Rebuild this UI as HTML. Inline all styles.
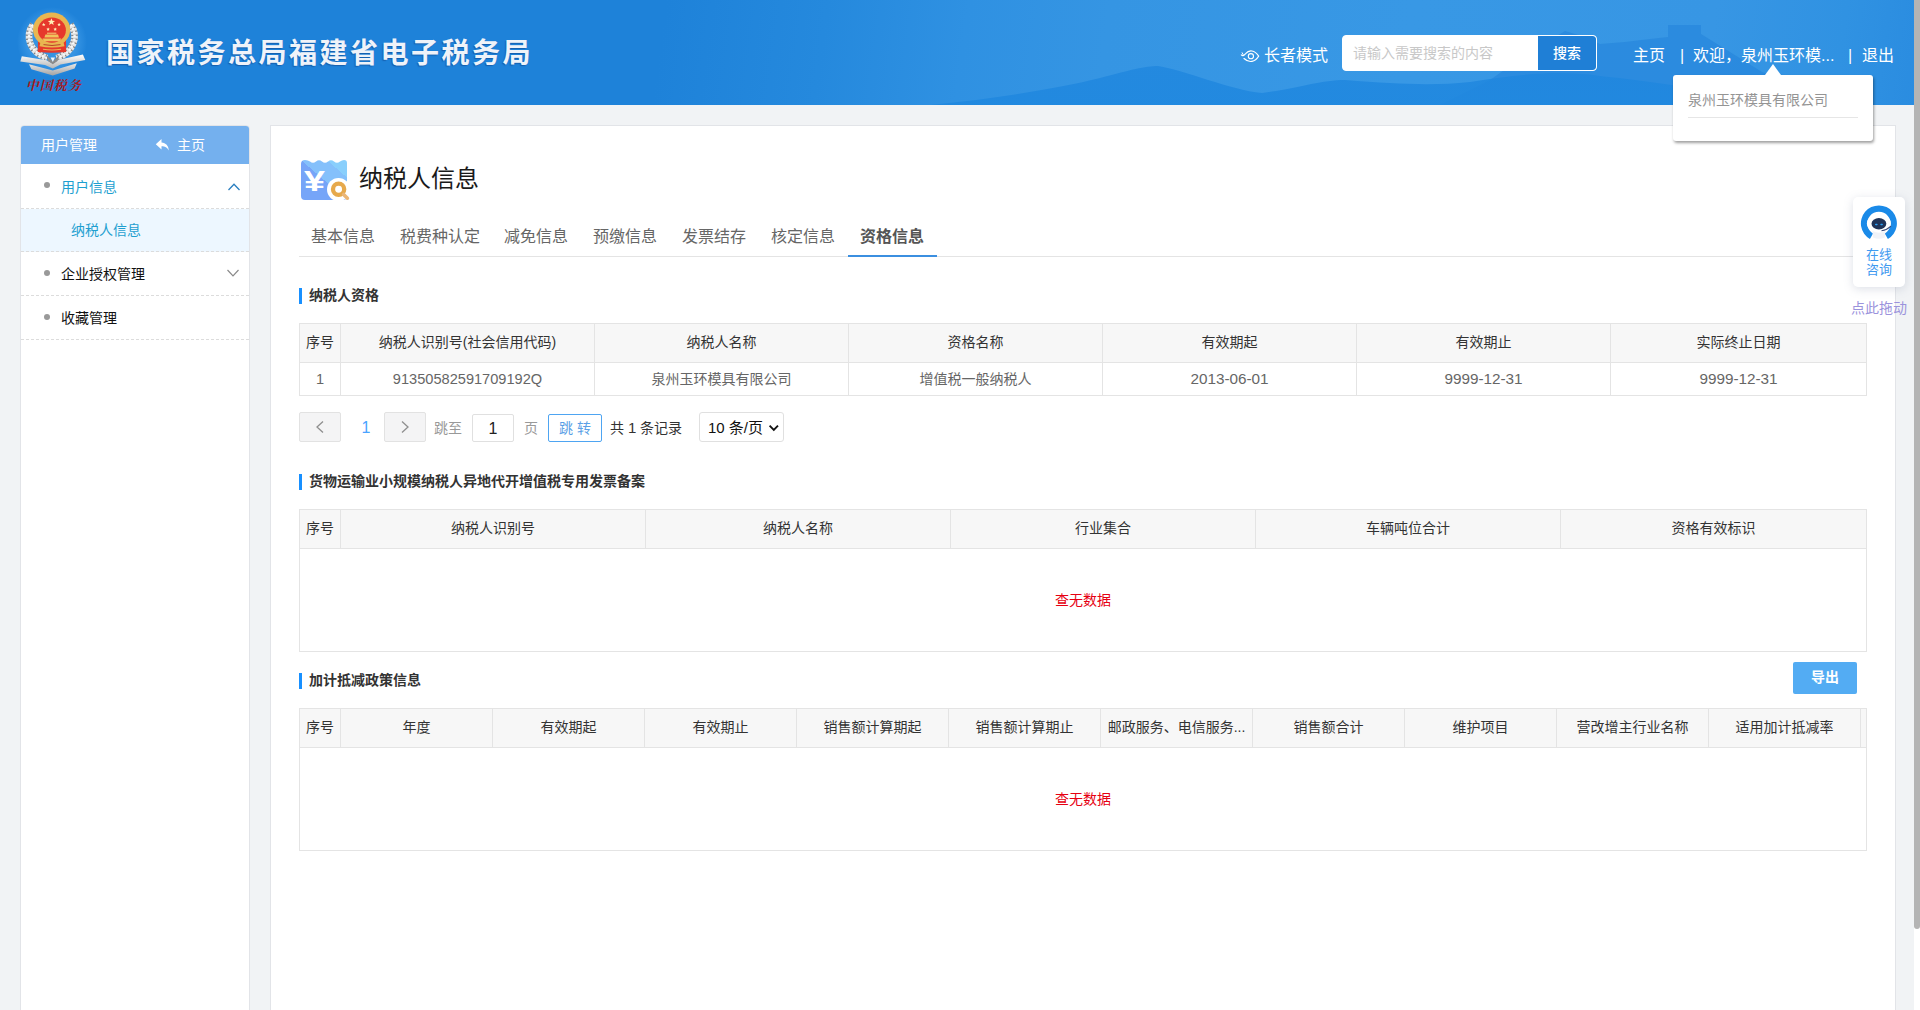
<!DOCTYPE html>
<html lang="zh-CN">
<head>
<meta charset="utf-8">
<title>国家税务总局福建省电子税务局</title>
<style>
*{box-sizing:border-box;margin:0;padding:0}
html,body{width:1920px;height:1010px;overflow:hidden}
body{position:relative;background:#f1f3f5;font-family:"Liberation Sans","Noto Sans CJK SC",sans-serif;font-size:14px;color:#333}
.abs{position:absolute}
/* header */
#hd{position:absolute;left:0;top:0;width:1914px;height:105px;background:linear-gradient(98deg,#1e82d9 0,#1e82d9 660px,#2589dd 820px,#2f91e2 960px,#3595e3 1100px,#3898e5 1400px,#3796e4 1700px,#3092e2 1830px,#2a8ce0 1914px);overflow:hidden}
#hd .ttl{position:absolute;left:106px;top:34px;font-size:28px;line-height:40px;font-weight:bold;color:#eff3f9;letter-spacing:2.5px;text-shadow:-1px 1px 1px rgba(10,50,120,.45);white-space:nowrap}
#logo{position:absolute;left:0;top:0}
.hlink{position:absolute;top:44px;font-size:16px;line-height:24px;color:#fff;white-space:nowrap}
#srch{position:absolute;left:1342px;top:35px;width:255px;height:36px;border:1px solid #fff;border-radius:4px;background:#fff;overflow:hidden}
#srch .ph{position:absolute;left:10px;top:0;line-height:34px;font-size:14px;color:#c8c8c8}
#srch .btn{position:absolute;right:0;top:0;width:58px;height:34px;background:#1f7fd6;color:#fff;font-size:14px;font-weight:500;line-height:34px;text-align:center;border-radius:0 3px 3px 0}
#pop{position:absolute;left:1673px;top:75px;width:200px;height:66px;background:#fff;border-radius:3px;box-shadow:1px 2px 3px rgba(0,0,0,.38);z-index:5}
#pop .t{position:absolute;left:15px;top:15px;font-size:14px;line-height:20px;color:#949494;white-space:nowrap}
#pop .ln{position:absolute;left:15px;top:42px;width:170px;height:1px;background:#e6e6e6}
#poparr{position:absolute;left:1765px;top:64px;width:0;height:0;border-left:8.5px solid transparent;border-right:8.5px solid transparent;border-bottom:11px solid #fff;z-index:6}
/* sidebar */
#sb{position:absolute;left:20px;top:125px;width:230px;height:900px;background:#fff;border:1px solid #e2e4e8;border-radius:4px 4px 0 0}
#sb .h{height:38px;border-radius:3px 3px 0 0;background:#74b0ee;color:#fff;font-size:14px;line-height:38px;position:relative}
#sb .it{height:44px;border-bottom:1px dashed #dcdcdc;position:relative;line-height:44px;font-size:14px;color:#111}
#sb .it.f{height:45px;line-height:46px}
#sb .it .dot{position:absolute;left:23px;top:18px;width:6px;height:6px;border-radius:50%;background:#999}
#sb .it .tx{position:absolute;left:40px;top:0}
#sb .sub{height:43px;border-bottom:1px dashed #dcdcdc;background:#edf7ff;color:#1e9fd0;line-height:43px;padding-left:50px;font-size:14px}
/* main */
#mn{position:absolute;left:270px;top:125px;width:1626px;height:900px;background:#fff;border:1px solid #e2e4e8}
.tab{position:absolute;top:226px;font-size:16px;line-height:22px;color:#666;white-space:nowrap}
.sec{position:absolute;left:299px;font-size:14px;font-weight:bold;line-height:16px;color:#333;padding-left:7px;border-left:3px solid #1890ff;white-space:nowrap;height:16px}
.sec span{position:relative;top:-1px}
table{border-collapse:collapse;table-layout:fixed;position:absolute;left:299px}
th,td{border:1px solid #e4e4e4;text-align:center;font-weight:normal;font-size:14px;white-space:nowrap;overflow:hidden;padding:0 0 2px 0}
th{background:#f7f7f7;color:#333;padding-bottom:4px}
td.n{font-size:14.6px;padding-bottom:0}
td.d{font-size:15.3px;padding-bottom:0}
td{color:#666}
.pbtn{position:absolute;top:412px;width:42px;height:30px;border:1px solid #e2e2e2;border-radius:2px;background:#f4f4f5;display:flex;align-items:center;justify-content:center}
.nod{color:#e60012;font-size:14px}
</style>
</head>
<body>
<div id="hd">
  <svg class="abs" style="left:0;top:0" width="1914" height="105" viewBox="0 0 1914 105">
    <defs><linearGradient id="mg" x1="0" y1="0" x2="0" y2="1"><stop offset="0" stop-color="#1f86de" stop-opacity=".8"/><stop offset="1" stop-color="#2088df" stop-opacity=".9"/></linearGradient>
    <linearGradient id="tg" x1="0" y1="0" x2="0" y2="1"><stop offset="0" stop-color="#1e82d9" stop-opacity=".35"/><stop offset=".6" stop-color="#1e82d9" stop-opacity="0"/></linearGradient></defs>
        <path d="M1440 105 L1490 80 L1530 52 L1565 31 L1585 37 L1600 44 L1625 42 L1650 39 L1668 37 L1668 25 L1701 25 L1701 34 L1730 52 L1762 72 L1805 87 L1850 105 Z" fill="#1f7fd9" opacity=".5"/>
    <path d="M930 105 C1000 98 1060 88 1100 78 C1130 70 1145 66 1158 66 C1185 70 1230 90 1262 93 C1300 88 1320 80 1345 80 C1400 84 1430 86 1470 82 C1520 74 1560 70 1600 76 C1660 82 1720 92 1790 105 Z" fill="url(#mg)"/>
  </svg>
  <svg id="logo" width="110" height="105" viewBox="0 0 110 105">
    <defs>
      <linearGradient id="sv" x1="0" y1="0" x2="0" y2="1"><stop offset="0" stop-color="#ffffff"/><stop offset="1" stop-color="#b4b4b4"/></linearGradient>
      <linearGradient id="sv2" x1="0" y1="0" x2="0" y2="1"><stop offset="0" stop-color="#e9e9e9"/><stop offset="1" stop-color="#a2a2a2"/></linearGradient>
      <radialGradient id="gl" cx="0.5" cy="0.5" r="0.5"><stop offset="0.7" stop-color="#58aef2" stop-opacity=".4"/><stop offset="1" stop-color="#58aef2" stop-opacity="0"/></radialGradient>
    </defs>
    <ellipse cx="52" cy="42" rx="35" ry="35" fill="url(#gl)"/>
    <!-- wreath -->
    <g fill="none" stroke-linecap="butt">
      <path d="M33 24.5 C24.6 36 29.5 52 47 58" stroke="#e6e6e6" stroke-width="6.6"/>
      <path d="M70.6 24.5 C79 36 74.1 52 56.6 58" stroke="#e6e6e6" stroke-width="6.6"/>
      <path d="M33 24.5 C24.6 36 29.5 52 47 58" stroke="#5f5f5f" stroke-width="6.6" stroke-dasharray="1.1 2.6" opacity=".75"/>
      <path d="M70.6 24.5 C79 36 74.1 52 56.6 58" stroke="#5f5f5f" stroke-width="6.6" stroke-dasharray="1.1 2.6" opacity=".75"/>
      <path d="M33 24.5 C24.6 36 29.5 52 47 58" stroke="#fff" stroke-width="2.4" stroke-dasharray="2 1.7" opacity=".9"/>
      <path d="M70.6 24.5 C79 36 74.1 52 56.6 58" stroke="#fff" stroke-width="2.4" stroke-dasharray="2 1.7" opacity=".9"/>
    </g>
    <!-- ribbon -->
    <path d="M29 64.2 L52.8 70.6 L76.8 63.2 L74.6 68.4 L52.8 75.6 L31.4 69.2 Z" fill="url(#sv2)"/>
    <path d="M20.3 61.4 L21.8 56.2 L46.5 60.2 L52.8 63.6 L59 59.8 L82.9 54.4 L85.3 60 L60.5 64.4 L52.8 68.6 L45 65 Z" fill="url(#sv)"/>
    <path d="M46 54.5 L52.8 61.5 L59.5 54.5 L57.5 61 L52.8 64.2 L48 61 Z" fill="#8b8b8b"/>
    <path d="M50.6 57.5 L52.8 62 L55 57.5 Z" fill="#f4f4f4"/>
    <!-- emblem -->
    <path d="M38 40 H66 L66.2 52 Q52 53.5 37.8 52 Z" fill="#e6382c"/>
    <ellipse cx="51.6" cy="29.6" rx="18.6" ry="17.1" fill="#e9b650"/>
    <ellipse cx="51.9" cy="30.2" rx="14" ry="12.6" fill="#e6382c"/>
    <path d="M40.5 42.3 Q52 45.2 63.5 42.3 L64.5 46.2 Q52 48.8 39.5 46.2 Z" fill="#e9b650"/>
    <path d="M43.5 44.6 Q52 46.4 60.5 44.6" stroke="#b8452a" stroke-width="1" fill="none"/>
    <path d="M43 49.3 Q52 50.6 61 49.3" stroke="#e9b650" stroke-width="1.1" fill="none"/>
    <path d="M42.5 38.4 H61.3 L59.6 41.2 H44.2 Z" fill="#efc35c"/>
    <path d="M45.4 34.4 H58 L59 37.4 H44.4 Z" fill="#efc35c"/>
    <path d="M47 33.2 H56.4" stroke="#f6d57a" stroke-width="1"/>
    <path d="M51.4 18.3 l1 2.4 2.6 .2 -2 1.6 .7 2.5 -2.3 -1.4 -2.3 1.4 .7 -2.5 -2 -1.6 2.6 -.2 Z" fill="#fff0b8"/>
    <path d="M43.7 22.8 l.55 1.1 1.2 .15 -.9 .8 .25 1.2 -1.1 -.6 -1.1 .6 .25 -1.2 -.9 -.8 1.2 -.15 Z M59.1 22.8 l.55 1.1 1.2 .15 -.9 .8 .25 1.2 -1.1 -.6 -1.1 .6 .25 -1.2 -.9 -.8 1.2 -.15 Z M48.1 27.5 l.55 1.1 1.2 .15 -.9 .8 .25 1.2 -1.1 -.6 -1.1 .6 .25 -1.2 -.9 -.8 1.2 -.15 Z M55.2 27.5 l.55 1.1 1.2 .15 -.9 .8 .25 1.2 -1.1 -.6 -1.1 .6 .25 -1.2 -.9 -.8 1.2 -.15 Z" fill="#fff0b8"/>
    <text x="53.8" y="89.6" text-anchor="middle" font-family="'Liberation Serif','Noto Serif CJK SC',serif" font-weight="700" font-style="italic" font-size="13" fill="#a81a20" letter-spacing="1">中国税务</text>
  </svg>
  <div class="ttl">国家税务总局福建省电子税务局</div>
  <svg class="abs" style="left:1238px;top:46px" width="24" height="20" viewBox="1238 46 24 20"><path d="M1241.3 54.9 C1243 56.6 1244.3 55 1245.6 53.6 C1249.2 49.4 1254.6 49.9 1258.7 56.1 C1255 61.8 1249.4 63.6 1244 58.5" fill="none" stroke="#fff" stroke-width="1.15" stroke-linecap="round"/><path d="M1242.2 52.8 L1243.1 54.6" stroke="#fff" stroke-width="1" stroke-linecap="round"/><circle cx="1250.9" cy="56.2" r="2.6" fill="none" stroke="#fff" stroke-width="1.1"/></svg>
  <div class="hlink" style="left:1264px">长者模式</div>
  <div id="srch"><span class="ph">请输入需要搜索的内容</span><span class="btn">搜索</span></div>
  <div class="hlink" style="left:1633px">主页</div>
  <div class="hlink" style="left:1680px">|</div>
  <div class="hlink" style="left:1693px">欢迎，泉州玉环模...</div>
  <div class="hlink" style="left:1848px">|</div>
  <div class="hlink" style="left:1862px">退出</div>
</div>
<div id="poparr"></div>
<div id="pop"><div class="t">泉州玉环模具有限公司</div><div class="ln"></div></div>

<div id="sb">
  <div class="h"><span class="abs" style="left:20px">用户管理</span><svg class="abs" style="left:134px;top:12px" width="16" height="14" viewBox="0 0 16 14"><path d="M6.5 1 L0.8 6.3 L6.5 11.6 V8.2 C10 8.2 12.2 9.2 13.8 12.6 C13.6 7.6 10.8 4.8 6.5 4.4 Z" fill="#fff"/></svg><span class="abs" style="left:156px">主页</span></div>
  <div class="it f" style="color:#1e9fd0"><i class="dot"></i><span class="tx">用户信息</span><svg class="abs" style="left:205.5px;top:18px" width="14" height="10" viewBox="0 0 14 10"><path d="M1.5 8 L7 2.2 L12.5 8" fill="none" stroke="#2a7fc0" stroke-width="1.3"/></svg></div>
  <div class="sub">纳税人信息</div>
  <div class="it"><i class="dot"></i><span class="tx">企业授权管理</span><svg class="abs" style="left:205px;top:16px" width="14" height="10" viewBox="0 0 14 10"><path d="M1.5 2 L7 7.8 L12.5 2" fill="none" stroke="#8a8a8a" stroke-width="1.2"/></svg></div>
  <div class="it"><i class="dot"></i><span class="tx">收藏管理</span></div>
</div>

<div id="mn"></div>
<svg class="abs" style="left:298px;top:156px" width="54" height="50" viewBox="298 156 54 50">
  <defs><linearGradient id="ig" x1="0" y1="1" x2="1" y2="0"><stop offset="0" stop-color="#76a5f8"/><stop offset=".5" stop-color="#76a5f8"/><stop offset=".5" stop-color="#84c0fb"/><stop offset=".78" stop-color="#84c0fb"/><stop offset=".78" stop-color="#89cffc"/><stop offset="1" stop-color="#89cffc"/></linearGradient></defs>
  <path d="M301 164 Q301 160 305 160 Q308 160 310 161.5 Q313 164 316 161.5 Q319 159.2 322 161.5 Q325 164 328 161.5 Q331 159.2 334 161.5 Q337 164 340 161.5 Q342 160 344 160 Q347 160 347 163 V196 Q347 200 343 200 H305 Q301 200 301 196 Z" fill="url(#ig)"/>
  <text transform="translate(314.5 191) scale(1.3 1)" x="0" y="0" text-anchor="middle" font-family="'Liberation Sans',sans-serif" font-weight="bold" font-size="29" fill="#fff">¥</text>
  <circle cx="338.5" cy="189.5" r="11.5" fill="#fff"/>
  <circle cx="338.6" cy="189.2" r="5.6" fill="none" stroke="#e6a94c" stroke-width="4.3"/>
  <path d="M343.6 194.4 L347.4 198.2" stroke="#ebb676" stroke-width="3.6" stroke-linecap="round"/>
</svg>
<div class="abs" style="left:359px;top:161px;font-size:24px;line-height:36px;color:#1a1a1a;white-space:nowrap">纳税人信息</div>

<div class="tab" style="left:311px">基本信息</div>
<div class="tab" style="left:400px">税费种认定</div>
<div class="tab" style="left:504px">减免信息</div>
<div class="tab" style="left:593px">预缴信息</div>
<div class="tab" style="left:682px">发票结存</div>
<div class="tab" style="left:771px">核定信息</div>
<div class="tab" style="left:860px;font-weight:bold;color:#555">资格信息</div>
<div class="abs" style="left:299px;top:256px;width:1568px;height:1px;background:#e4e4e4"></div>
<div class="abs" style="left:848px;top:255px;width:89px;height:2px;background:#3b8fe0"></div>

<div class="sec" style="top:288px"><span>纳税人资格</span></div>
<table style="top:323px;width:1568px">
<colgroup><col style="width:41px"><col style="width:254px"><col style="width:254px"><col style="width:254px"><col style="width:254px"><col style="width:254px"><col></colgroup>
<tr style="height:39px"><th>序号</th><th>纳税人识别号(社会信用代码)</th><th>纳税人名称</th><th>资格名称</th><th>有效期起</th><th>有效期止</th><th>实际终止日期</th></tr>
<tr style="height:33px"><td class="n">1</td><td class="n">91350582591709192Q</td><td>泉州玉环模具有限公司</td><td>增值税一般纳税人</td><td class="d">2013-06-01</td><td class="d">9999-12-31</td><td class="d">9999-12-31</td></tr>
</table>


<!-- pagination -->
<div class="pbtn" style="left:299px"><svg width="10" height="14" viewBox="0 0 10 14"><path d="M8 1.5 L2 7 L8 12.5" fill="none" stroke="#8f8f8f" stroke-width="1.3"/></svg></div>
<div class="abs" style="left:355px;top:417px;width:22px;text-align:center;font-size:16px;line-height:22px;color:#4aa3ff">1</div>
<div class="pbtn" style="left:384px"><svg width="10" height="14" viewBox="0 0 10 14"><path d="M2 1.5 L8 7 L2 12.5" fill="none" stroke="#8f8f8f" stroke-width="1.3"/></svg></div>
<div class="abs" style="left:434px;top:417px;font-size:14px;line-height:22px;color:#999">跳至</div>
<div class="abs" style="left:472px;top:414px;width:42px;height:28px;border:1px solid #e0e0e0;border-radius:2px;background:#fff;text-align:center;font-size:16px;line-height:27px;color:#222">1</div>
<div class="abs" style="left:524px;top:417px;font-size:14px;line-height:22px;color:#999">页</div>
<div class="abs" style="left:548px;top:414px;width:54px;height:28px;border:1px solid #4ea5f2;border-radius:2px;background:#fff;text-align:center;font-size:14px;line-height:27px;color:#5b9fe6;white-space:nowrap">跳 转</div>
<div class="abs" style="left:610px;top:417px;font-size:14px;line-height:22px;color:#333;white-space:nowrap">共 <span style="font-size:15px">1</span> 条记录</div>
<div class="abs" style="left:699px;top:412px;width:85px;height:30px;border:1px solid #e0e0e0;border-radius:3px;background:#fff;font-size:15px;line-height:29px;color:#111;padding-left:8px;white-space:nowrap">10 条/页<svg class="abs" style="left:68px;top:11px" width="12" height="9" viewBox="0 0 12 9"><path d="M1.6 1.6 L5.8 5.8 L10 1.6" fill="none" stroke="#111" stroke-width="1.9"/></svg></div>

<div class="sec" style="top:474px"><span>货物运输业小规模纳税人异地代开增值税专用发票备案</span></div>
<table style="top:509px;width:1568px">
<colgroup><col style="width:41px"><col style="width:305px"><col style="width:305px"><col style="width:305px"><col style="width:305px"><col></colgroup>
<tr style="height:39px"><th>序号</th><th>纳税人识别号</th><th>纳税人名称</th><th>行业集合</th><th>车辆吨位合计</th><th>资格有效标识</th></tr>
<tr style="height:103px"><td colspan="6" class="nod">查无数据</td></tr>
</table>

<div class="sec" style="top:673px"><span>加计抵减政策信息</span></div>
<div class="abs" style="left:1793px;top:662px;width:64px;height:32px;background:#53acf3;color:#fff;font-size:14px;font-weight:bold;line-height:31px;text-align:center;border-radius:2px">导出</div>
<table style="top:708px;width:1568px">
<colgroup><col style="width:41px"><col style="width:152px"><col style="width:152px"><col style="width:152px"><col style="width:152px"><col style="width:152px"><col style="width:152px"><col style="width:152px"><col style="width:152px"><col style="width:152px"><col style="width:152px"><col></colgroup>
<tr style="height:39px"><th>序号</th><th>年度</th><th>有效期起</th><th>有效期止</th><th>销售额计算期起</th><th>销售额计算期止</th><th>邮政服务、电信服务...</th><th>销售额合计</th><th>维护项目</th><th>营改增主行业名称</th><th>适用加计抵减率</th><th></th></tr>
<tr style="height:103px"><td colspan="12" class="nod">查无数据</td></tr>
</table>


<!-- floating consult -->
<div class="abs" style="left:1853px;top:197px;width:52px;height:90px;background:#fff;border-radius:5px;box-shadow:0 2px 10px rgba(120,130,160,.25)"></div>
<svg class="abs" style="left:1858px;top:202px" width="42" height="42" viewBox="1858 202 42 42">
  <path d="M1869.90 238.99 A18.0 18.0 0 1 1 1887.90 238.99 L1884.75 233.53 A11.7 11.7 0 1 0 1873.05 233.53 Z" fill="#1a8ae8"/>
  <ellipse cx="1878.9" cy="223.4" rx="12" ry="8.6" fill="#fff"/>
  <path d="M1872.5 231 Q1878.9 234.5 1885.3 231 L1884.8 237.6 Q1878.9 240 1873 237.6 Z" fill="#f1f3f8"/>
  <ellipse cx="1878.9" cy="223.8" rx="7.4" ry="5.7" fill="#1f3358"/>
  <rect x="1875" y="223.8" width="2.6" height="1.4" rx=".7" fill="#2aa0f5"/><rect x="1880.3" y="223.8" width="2.6" height="1.4" rx=".7" fill="#2aa0f5"/>
  <path d="M1881.5 230.8 Q1887 230 1891 226.2" fill="none" stroke="#3a4a78" stroke-width="1.1"/>
</svg>
<div class="abs" style="left:1853px;top:247px;width:52px;text-align:center;font-size:13px;line-height:15px;color:#3f9af0">在线<br>咨询</div>
<div class="abs" style="left:1850px;top:299px;width:58px;text-align:center;font-size:14px;line-height:18px;color:#9b93dc;white-space:nowrap">点此拖动</div>
<!-- scrollbar -->
<div class="abs" style="left:1914px;top:0;width:6px;height:1010px;background:#fff"></div>
<div class="abs" style="left:1914px;top:0;width:6px;height:929px;background:#b4b4b4;border-radius:0 0 3px 3px"></div>
</body>
</html>
